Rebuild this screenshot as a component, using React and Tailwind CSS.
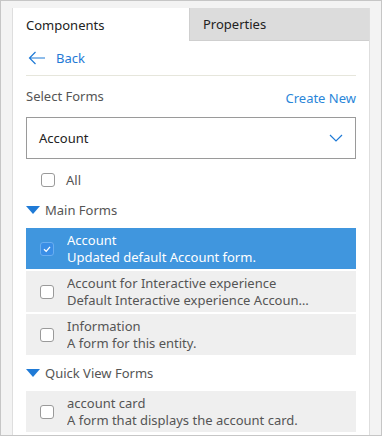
import { useState } from 'react';

function Box({ checked }) {
  if (checked) {
    return (
      <span className="flex h-[14px] w-[14px] shrink-0 items-center justify-center rounded-[3px] border border-[#6aaef0] bg-[#3a8ee6]">
        <svg width="10" height="10" viewBox="0 0 10 10" fill="none">
          <path d="M2 5.2 L4.2 7.4 L8 2.8" stroke="white" strokeWidth="1.3" />
        </svg>
      </span>
    );
  }
  return <span className="h-[14px] w-[14px] shrink-0 rounded-[3px] border border-[#9a9a9a] bg-white" />;
}

function Caret() {
  return (
    <svg width="14" height="8" viewBox="0 0 14 8" className="shrink-0">
      <path d="M0 0 H14 L7 8 Z" fill="#1f7ad6" />
    </svg>
  );
}

function FormRow({ title, desc, checked }) {
  return (
    <div
      className={
        'flex h-[41px] items-center ' +
        (checked ? 'bg-[#4096de] text-white' : 'bg-[#efefef] text-[#555]')
      }
    >
      <div className="flex w-[41px] justify-center pl-[1px]">
        <Box checked={checked} />
      </div>
      <div className="min-w-0 flex-1 pr-[44px] leading-[17px]">
        <div className="truncate">{title}</div>
        <div className="truncate">{desc}</div>
      </div>
    </div>
  );
}

export default function App() {
  const [tab] = useState('components');

  return (
    <div
      className="h-[436px] w-[382px] border border-[#c6c6c6] bg-[#f3f3f3] px-[11px] pt-[7px] text-[13px] leading-[20px]"
      style={{ fontFamily: '"Noto Sans", sans-serif' }}
    >
      <div className="flex h-full flex-col overflow-hidden border-x border-[#dedede] bg-white">
        {/* Tabs */}
        <div className="flex h-[33px] shrink-0">
          <div className="flex w-[176px] items-center pl-[13px] text-[#222]">Components</div>
          <div className="flex flex-1 items-center border-b border-l border-[#cfcfcf] bg-[#dcdcdc] pl-[13px] text-[#222]">
            Properties
          </div>
        </div>

        <div className="flex flex-col px-[13px]">
          {/* Back */}
          <div className="flex h-[35px] items-center border-b border-[#e6e6dc] pl-[2px] text-[#1f7ad6]">
            <svg width="18" height="14" viewBox="0 0 18 14" fill="none" className="mr-[10px]">
              <path d="M17 7 H1.5 M7.5 1 L1.5 7 L7.5 13" stroke="#1f7ad6" strokeWidth="1.2" />
            </svg>
            Back
          </div>

          <div className="mt-[10px] flex h-[20px] items-center justify-between">
            <span className="text-[#555]">Select Forms</span>
            <span className="mt-[4px] text-[#2a86d9]">Create New</span>
          </div>

          {/* Dropdown */}
          <div className="mt-[11px] flex h-[42px] items-center justify-between border border-[#9a9a9a] pl-[12px] pr-[12px] text-[#222]">
            Account
            <svg width="14" height="8" viewBox="0 0 14 8" fill="none">
              <path d="M1 1 L7 7 L13 1" stroke="#1f7ad6" strokeWidth="1.2" />
            </svg>
          </div>

          <div className="mt-[11px] flex h-[20px] items-center pl-[15px] text-[#555]">
            <Box />
            <span className="ml-[11px]">All</span>
          </div>

          <div className="mt-[10px] flex h-[20px] items-center text-[#555]">
            <Caret />
            <span className="ml-[5px]">Main Forms</span>
          </div>

          <div className="mt-[7px] flex flex-col gap-[2px] border-t border-white">
            <FormRow title="Account" desc="Updated default Account form." checked />
            <FormRow
              title="Account for Interactive experience"
              desc="Default Interactive experience Account form"
            />
            <FormRow title="Information" desc="A form for this entity." />
          </div>

          <div className="mt-[8px] flex h-[20px] items-center text-[#555]">
            <Caret />
            <span className="ml-[5px]">Quick View Forms</span>
          </div>

          <div className="mt-[8px]">
            <FormRow title="account card" desc="A form that displays the account card." />
          </div>
        </div>
      </div>
    </div>
  );
}
